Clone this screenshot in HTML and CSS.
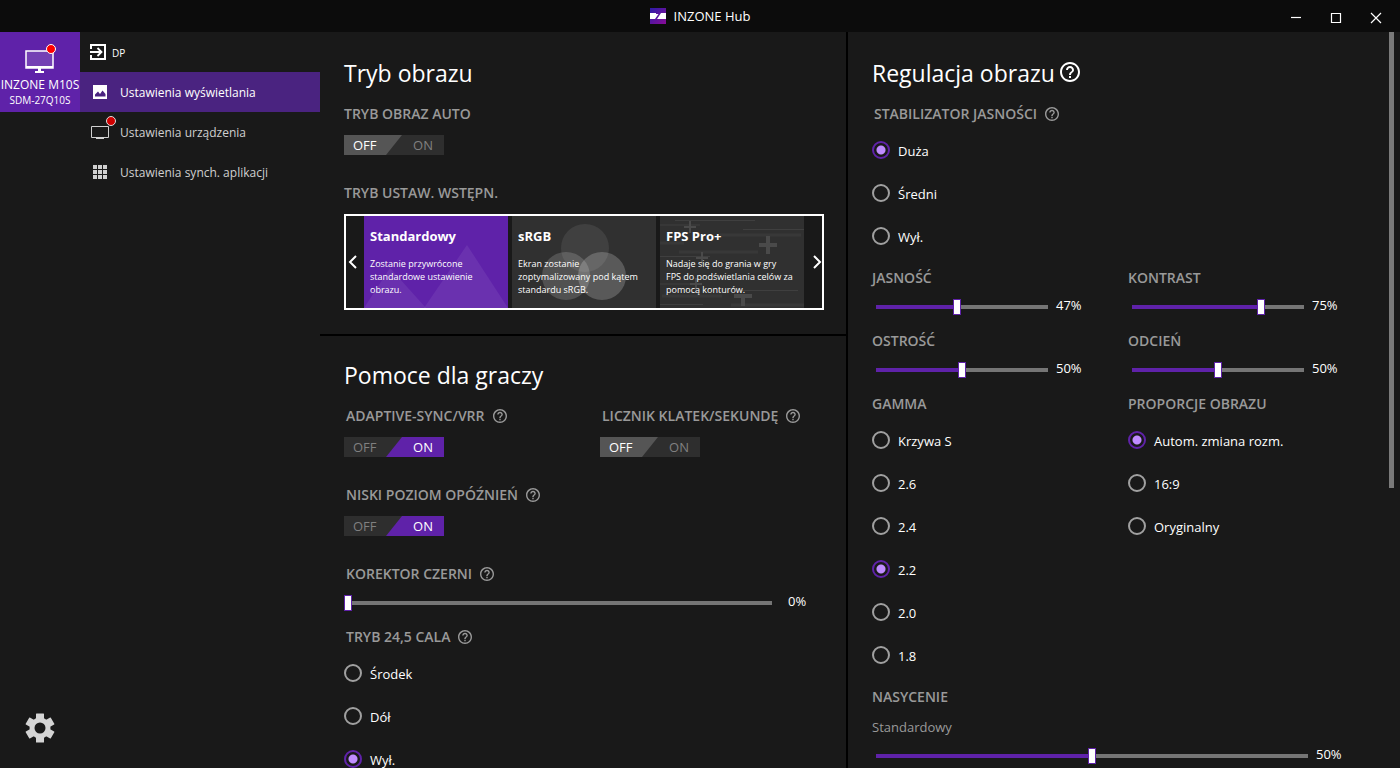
FILE: index.html
```html
<!DOCTYPE html>
<html lang="pl">
<head>
<meta charset="utf-8">
<title>INZONE Hub</title>
<link rel="stylesheet" href="styles.css">
</head>
<body>
<svg class="defs" aria-hidden="true">
  <symbol id="help" viewBox="2 2 20 20"><path d="M11 18h2v-2h-2v2zm1-16C6.480 2 2 6.480 2 12s4.480 10 10 10 10-4.480 10-10S17.520 2 12 2zm0 18c-4.410 0-8-3.590-8-8s3.590-8 8-8 8 3.590 8 8-3.590 8-8 8zm0-14c-2.210 0-4 1.790-4 4h2c0-1.100.900-2 2-2s2 .900 2 2c0 2-3 1.750-3 5h2c0-2.250 3-2.500 3-5 0-2.210-1.790-4-4-4z"/></symbol>
</svg>
<header class="titlebar">
  <div class="brand">
    <svg width="16" height="16" viewBox="0 0 16 16" aria-hidden="true">
      <defs><linearGradient id="lg" x1="0" y1="0" x2="1" y2="1"><stop offset="0" stop-color="#2c1ca8"/><stop offset="1" stop-color="#8a0c96"/></linearGradient></defs>
      <rect width="16" height="16" fill="url(#lg)"/>
      <rect y="5" width="16" height="6" fill="#fff"/>
      <path d="M6 5h5L7 11H5l3.500-5H6z" fill="#5a16a0"/>
    </svg>
    <span>INZONE Hub</span>
  </div>
  <div class="window-controls">
    <button type="button" aria-label="Minimalizuj"><svg width="12" height="12" viewBox="0 0 12 12"><path d="M1 5.500h10"/></svg></button>
    <button type="button" aria-label="Maksymalizuj"><svg width="12" height="12" viewBox="0 0 12 12"><path d="M1.500 1.500h9v9h-9z"/></svg></button>
    <button type="button" aria-label="Zamknij"><svg width="12" height="12" viewBox="0 0 12 12"><path d="M1 1l10 10M11 1L1 11"/></svg></button>
  </div>
</header>
<div class="app">
  <aside class="devices">
    <button type="button" class="device">
      <svg width="32" height="32" viewBox="0 0 32 32" aria-hidden="true">
        <rect x="2" y="7" width="27" height="17" fill="#7440b4" stroke="#fff" stroke-width="1.500"/>
        <path d="M2 23h27" stroke="#fff" stroke-width="2"/>
        <path d="M14 24h3v3h3v2h-9v-2h3z" fill="#fff"/>
        <circle cx="27" cy="5" r="4.500" fill="#f00" stroke="#fff"/>
      </svg>
      <span class="device-name">INZONE M10S</span>
      <span class="device-model">SDM-27Q10S</span>
    </button>
    <button type="button" class="settings" aria-label="Ustawienia">
      <svg width="32" height="32" viewBox="-16 -16 32 32">
        <g fill="#d4d4d4"><circle r="10.500"/>
          <path id="tooth" d="M-4-14q0-.500.500-.500h7q.500 0 .500.500V14q0 .500-.500.500h-7q-.500 0-.500-.500z"/>
          <use href="#tooth" transform="rotate(60)"/><use href="#tooth" transform="rotate(120)"/></g>
        <circle r="5.500" fill="#191919"/>
      </svg>
    </button>
  </aside>
  <nav class="nav">
    <div class="input-source">
      <svg width="16" height="16" viewBox="0 0 16 16" fill="none" stroke="#fff" stroke-width="2" aria-hidden="true"><path d="M1 5V1h14v14H1v-4"/><path d="M0 8h11M7.500 4l4 4-4 4" stroke-width="1.800"/></svg>
      <span>DP</span>
    </div>
    <a class="nav-item active" href="#display">
      <svg width="24" height="24" viewBox="0 0 24 24" aria-hidden="true"><path d="M5 5h14v14H5z" fill="#fff"/><path d="M7 16.500v-2l3-3 2 2.500 2.500-3.500L17.500 14v2.500z" fill="#4a2380"/></svg>
      <span>Ustawienia wyświetlania</span>
    </a>
    <a class="nav-item" href="#device">
      <svg width="24" height="24" viewBox="0 0 24 24" aria-hidden="true"><path d="M3.500 6.500h17v11h-17z" fill="none" stroke="#d0d0d0"/><path d="M8 18.500h8" stroke="#d0d0d0"/></svg>
      <span>Ustawienia urządzenia</span>
      <i class="badge"></i>
    </a>
    <a class="nav-item" href="#apps">
      <svg width="24" height="24" viewBox="0 0 24 24" fill="#d0d0d0" aria-hidden="true"><path d="M5 5h4v4H5zM10 5h4v4h-4zM15 5h4v4h-4zM5 10h4v4H5zM10 10h4v4h-4zM15 10h4v4h-4zM5 15h4v4H5zM10 15h4v4h-4zM15 15h4v4h-4z"/></svg>
      <span>Ustawienia synch. aplikacji</span>
    </a>
  </nav>
  <main class="content">
    <div class="column">
      <section class="panel first">
        <h2>Tryb obrazu</h2>
        <div class="field">
          <h3 id="l-auto">TRYB OBRAZ AUTO</h3>
          <label class="toggle"><input type="checkbox" role="switch" aria-labelledby="l-auto"><span>OFF</span><span>ON</span></label>
        </div>
        <div class="field spaced">
          <h3>TRYB USTAW. WSTĘPN.</h3>
          <div class="carousel">
            <button type="button" class="arrow previous" aria-label="Poprzedni"><svg width="10" height="14" viewBox="0 0 10 14"><path d="M8 1L2 7l6 6"/></svg></button>
            <button type="button" class="card selected">
              <svg class="art" viewBox="0 0 144 92" preserveAspectRatio="none" aria-hidden="true"><path d="M0 92L26 52 62 92z" fill="#fff" opacity=".070"/><path d="M60 92L103 29l41 63z" fill="#fff" opacity=".070"/></svg>
              <b>Standardowy</b>
              <span>Zostanie przywrócone<br>standardowe ustawienie<br>obrazu.</span>
            </button>
            <button type="button" class="card">
              <svg class="art" viewBox="0 0 144 92" aria-hidden="true"><g fill="#fff"><circle cx="73" cy="32" r="24" opacity=".080"/><circle cx="54" cy="60" r="24" opacity=".160"/><circle cx="90" cy="60" r="24" opacity=".200"/></g></svg>
              <b>sRGB</b>
              <span>Ekran zostanie<br>zoptymalizowany pod kątem<br>standardu sRGB.</span>
            </button>
            <button type="button" class="card">
              <svg class="art" viewBox="0 0 144 92" aria-hidden="true"><g stroke="#3f3f3f" fill="none"><path d="M15 4.500h80M0 9h40M83 13.500h61M0 40.500h50M70 48.500h40M80 74.500h58M0 88.500h43M0 68h30"/><path d="M60 19h81M19 36h79M2 80h60M71 89h73M0 27h24" stroke="#383838" stroke-width="3"/><path d="M24 11h12M30 5v12M36 42h12M42 36v12M30 68h12M36 62v12" stroke="#4a4a4a" stroke-width="2"/><path d="M99 29h18M108 20v18M74 80h18M83 80v10" stroke="#4a4a4a" stroke-width="4"/></g></svg>
              <b>FPS Pro+</b>
              <span>Nadaje się do grania w gry<br>FPS do podświetlania celów za<br>pomocą konturów.</span>
            </button>
            <button type="button" class="arrow next" aria-label="Następny"><svg width="10" height="14" viewBox="0 0 10 14"><path d="M2 1l6 6-6 6"/></svg></button>
          </div>
        </div>
      </section>
      <section class="panel">
        <h2>Pomoce dla graczy</h2>
        <div class="pair">
          <div class="field">
            <h3 class="with-help"><span id="l-sync">ADAPTIVE-SYNC/VRR</span><svg><use href="#help"/></svg></h3>
            <label class="toggle"><input type="checkbox" role="switch" aria-labelledby="l-sync" checked><span>OFF</span><span>ON</span></label>
          </div>
          <div class="field">
            <h3 class="with-help"><span id="l-fps">LICZNIK KLATEK/SEKUNDĘ</span><svg><use href="#help"/></svg></h3>
            <label class="toggle"><input type="checkbox" role="switch" aria-labelledby="l-fps"><span>OFF</span><span>ON</span></label>
          </div>
        </div>
        <div class="field spaced">
          <h3 class="with-help"><span id="l-lag">NISKI POZIOM OPÓŹNIEŃ</span><svg><use href="#help"/></svg></h3>
          <label class="toggle"><input type="checkbox" role="switch" aria-labelledby="l-lag" checked><span>OFF</span><span>ON</span></label>
        </div>
        <div class="field spaced">
          <h3 class="with-help"><label for="black">KOREKTOR CZERNI</label><svg><use href="#help"/></svg></h3>
          <div class="slider wide"><input type="range" id="black" value="0" style="--v:0"><output for="black">0%</output></div>
        </div>
        <div class="field after-slider" role="radiogroup" aria-labelledby="l-size">
          <h3 class="with-help"><span id="l-size">TRYB 24,5 CALA</span><svg><use href="#help"/></svg></h3>
          <div class="radios">
            <label><input type="radio" name="size">Środek</label>
            <label><input type="radio" name="size">Dół</label>
            <label><input type="radio" name="size" checked>Wył.</label>
          </div>
        </div>
      </section>
    </div>
    <section class="panel first adjust">
      <h2>Regulacja obrazu<svg><use href="#help"/></svg></h2>
      <div class="field" role="radiogroup" aria-labelledby="l-stab">
        <h3 class="with-help"><span id="l-stab">STABILIZATOR JASNOŚCI</span><svg><use href="#help"/></svg></h3>
        <div class="radios">
          <label><input type="radio" name="stab" checked>Duża</label>
          <label><input type="radio" name="stab">Średni</label>
          <label><input type="radio" name="stab">Wył.</label>
        </div>
      </div>
      <div class="pair after-radios">
        <div class="field"><h3><label for="bright">JASNOŚĆ</label></h3><div class="slider half"><input type="range" id="bright" value="47" style="--v:.47"><output for="bright">47%</output></div></div>
        <div class="field"><h3><label for="contrast">KONTRAST</label></h3><div class="slider half"><input type="range" id="contrast" value="75" style="--v:.75"><output for="contrast">75%</output></div></div>
      </div>
      <div class="pair after-slider">
        <div class="field"><h3><label for="sharp">OSTROŚĆ</label></h3><div class="slider half"><input type="range" id="sharp" value="50" style="--v:.5"><output for="sharp">50%</output></div></div>
        <div class="field"><h3><label for="hue">ODCIEŃ</label></h3><div class="slider half"><input type="range" id="hue" value="50" style="--v:.5"><output for="hue">50%</output></div></div>
      </div>
      <div class="pair after-slider">
        <div class="field" role="radiogroup" aria-labelledby="l-gamma">
          <h3 id="l-gamma">GAMMA</h3>
          <div class="radios">
            <label><input type="radio" name="gamma">Krzywa S</label>
            <label><input type="radio" name="gamma">2.6</label>
            <label><input type="radio" name="gamma">2.4</label>
            <label><input type="radio" name="gamma" checked>2.2</label>
            <label><input type="radio" name="gamma">2.0</label>
            <label><input type="radio" name="gamma">1.8</label>
          </div>
        </div>
        <div class="field" role="radiogroup" aria-labelledby="l-ratio">
          <h3 id="l-ratio">PROPORCJE OBRAZU</h3>
          <div class="radios">
            <label><input type="radio" name="ratio" checked>Autom. zmiana rozm.</label>
            <label><input type="radio" name="ratio">16:9</label>
            <label><input type="radio" name="ratio">Oryginalny</label>
          </div>
        </div>
      </div>
      <div class="field after-radios">
        <h3>NASYCENIE</h3>
        <label class="sub" for="sat">Standardowy</label>
        <div class="slider"><input type="range" id="sat" value="50" style="--v:.5"><output for="sat">50%</output></div>
      </div>
    </section>
    <div class="scrollbar"><div class="thumb"></div></div>
  </main>
</div>
</body>
</html>
```

FILE: styles.css
```css
:root {
  --bg: #191919;
  --purple: #5f22a9;
  --muted: #999;
}
* { box-sizing: border-box; }
body {
  margin: 0;
  height: 100vh;
  display: flex;
  flex-direction: column;
  overflow: hidden;
  background: var(--bg);
  color: #fff;
  font: 13px/20px "Open Sans", "Noto Sans", sans-serif;
}
button {
  border: 0;
  padding: 0;
  background: none;
  color: inherit;
  font: inherit;
}
svg { display: block; flex: none; }
.defs { position: absolute; width: 0; height: 0; }

.titlebar {
  flex: none;
  height: 32px;
  display: grid;
  grid-template-columns: 1fr auto 1fr;
  align-items: center;
  background: #0c0c0c;
}
.brand { grid-column: 2; display: flex; align-items: center; gap: 8px; }
.window-controls {
  display: flex;
  justify-content: flex-end;
  padding: 4px 4px 0 0;
}
.window-controls button {
  width: 40px;
  height: 28px;
  display: grid;
  place-items: center;
}
.window-controls svg { fill: none; stroke: #fff; stroke-width: 1.2; }

.app { flex: 1; min-height: 0; display: flex; }
.devices {
  flex: 0 0 80px;
  display: flex;
  flex-direction: column;
  justify-content: space-between;
  align-items: center;
  padding-bottom: 24px;
}
.device {
  width: 100%;
  height: 80px;
  padding-top: 12px;
  display: flex;
  flex-direction: column;
  align-items: center;
  background: var(--purple);
  white-space: nowrap;
}
.device-name { font-size: 12px; line-height: 18px; }
.device-model { font-size: 10px; line-height: 12px; }

.nav { flex: 0 0 240px; }
.input-source {
  height: 40px;
  padding-left: 10px;
  display: flex;
  align-items: center;
  gap: 6px;
  font-size: 10px;
}
.input-source span { padding-top: 2px; }
.nav-item {
  position: relative;
  height: 40px;
  padding-left: 8px;
  display: flex;
  align-items: center;
  gap: 8px;
  color: #d0d0d0;
  font-size: 12px;
  text-decoration: none;
}
.nav-item.active { background: #4a2380; color: #fff; }
.nav-item span { padding-top: 2px; }
.badge {
  position: absolute;
  left: 26px;
  top: 4px;
  width: 10px;
  height: 10px;
  border: 1px solid #ddd;
  border-radius: 50%;
  background: #d00000;
}

.content {
  flex: 1;
  min-width: 0;
  display: grid;
  grid-template-columns: calc(50% - 14px) minmax(0, 1fr) 11px;
  grid-template-rows: 100%;
  overflow: hidden;
}
.column { min-height: 0; }
.panel { padding: 22px 22px 24px 24px; }
.panel.first { padding-top: 24px; }
.panel + .panel { border-top: 2px solid #000; }
.adjust { border-left: 2px solid #000; padding-right: 37px; }
.scrollbar { padding-right: 6px; }
.thumb { height: 62%; background: #7a7a7a; }

h2 {
  margin: 0 0 14px;
  display: flex;
  align-items: center;
  gap: 5px;
  font-size: 23px;
  line-height: 34px;
  font-weight: 400;
}
h2 svg { width: 20px; height: 20px; margin-bottom: 2px; fill: #fff; }
h3 {
  margin: 0;
  color: var(--muted);
  font-size: 14px;
  line-height: 20px;
  font-weight: 600;
  white-space: nowrap;
}
.with-help { display: flex; align-items: center; gap: 8px; padding-left: 2px; }
.with-help svg { width: 14px; height: 14px; fill: var(--muted); }
.spaced { margin-top: 28px; }
.after-slider { margin-top: 16px; }
.after-radios { margin-top: 10px; }
.pair { display: grid; grid-template-columns: 1fr 1fr; gap: 32px; }

.toggle {
  position: relative;
  margin-top: 11px;
  width: 100px;
  height: 20px;
  padding: 0 11px 0 9px;
  display: flex;
  justify-content: space-between;
  background: #2e2e2e;
  color: #808080;
}
.toggle input {
  position: absolute;
  inset: 0;
  margin: 0;
  appearance: none;
  background: #555;
  clip-path: polygon(0 0, 58% 0, 42% 100%, 0 100%);
}
.toggle input:checked {
  background: var(--purple);
  clip-path: polygon(58% 0, 100% 0, 100% 100%, 42% 100%);
}
.toggle span { position: relative; }
.toggle input:not(:checked) + span,
.toggle input:checked + span + span { color: #fff; }

.carousel {
  margin-top: 11px;
  height: 96px;
  border: 2px solid #fff;
  display: grid;
  grid-template-columns: 18px 144fr 148fr 148fr 18px;
}
.arrow { display: flex; align-items: center; }
.previous { padding-left: 2px; }
.next { justify-content: flex-end; }
.arrow svg { fill: none; stroke: #fff; stroke-width: 2; }
.card {
  position: relative;
  overflow: hidden;
  padding: 11px 0 0 6px;
  display: flex;
  flex-direction: column;
  gap: 12px;
  background: #303030;
  text-align: left;
  white-space: nowrap;
}
.card + .card { margin-left: 4px; }
.card.selected { background: var(--purple); }
.card b { position: relative; font-size: 13px; line-height: 18px; }
.card span { position: relative; font-size: 9px; line-height: 13px; }
.art { position: absolute; inset: 0; width: 100%; height: 100%; }

.slider {
  margin-top: 11px;
  height: 16px;
  display: flex;
  align-items: flex-start;
  gap: 4px;
}
.slider.wide { gap: 12px; }
.slider.half { padding-right: 4px; }
.slider output { flex: 0 0 36px; line-height: 12px; }
input[type="range"] {
  flex: 1;
  min-width: 0;
  height: 16px;
  margin: 0;
  appearance: none;
  background: none;
}
input[type="range"]::-webkit-slider-runnable-track {
  height: 16px;
  background:
    linear-gradient(var(--purple), var(--purple)) 4px 6px / calc((100% - 8px) * var(--v)) 4px no-repeat,
    linear-gradient(#757575, #757575) 4px 6px / calc(100% - 8px) 4px no-repeat;
}
input[type="range"]::-webkit-slider-thumb {
  appearance: none;
  width: 8px;
  height: 16px;
  border: 1px solid var(--purple);
  background: #fff;
}

.radios { margin-top: 5px; display: flex; flex-direction: column; }
.radios label {
  height: 43px;
  display: flex;
  align-items: center;
  gap: 8px;
}
input[type="radio"] {
  flex: none;
  width: 18px;
  height: 18px;
  margin: 0 0 2px;
  appearance: none;
  border: 2px solid #a0a0a0;
  border-radius: 50%;
}
input[type="radio"]:checked {
  border-color: var(--purple);
  background: radial-gradient(circle, #c08cff 4px, transparent 5px);
}
.sub { display: block; margin-top: 10px; color: var(--muted); }
```
